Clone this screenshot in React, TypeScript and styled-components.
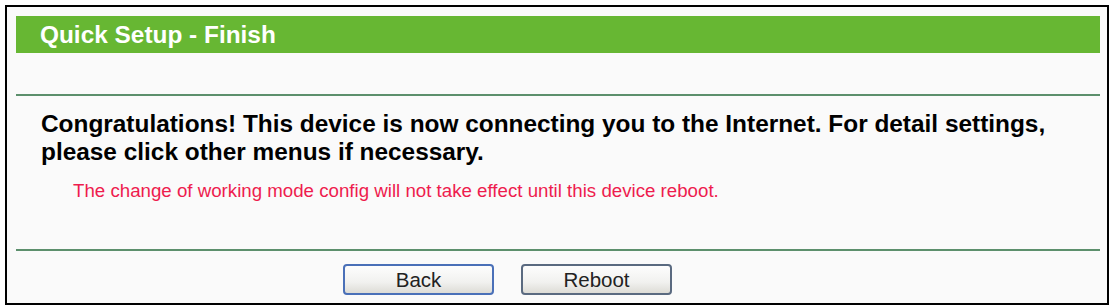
import React from "react";
import styled, { createGlobalStyle } from "styled-components";

const Global = createGlobalStyle`
  html, body { margin: 0; padding: 0; background: #ffffff; }
  body { font-family: "Liberation Sans", Arial, sans-serif; }
`;

const Frame = styled.div`
  margin: 5px 0 0 5px;
  width: 1104px;
  height: 300px;
  box-sizing: border-box;
  border: 2px solid #000;
  background: #fafafa;
  padding: 9px 7px 0 9px;
  display: flex;
  flex-direction: column;
`;

const Header = styled.div`
  height: 37px;
  background: #67b733;
  color: #ffffff;
  font-size: 24.4px;
  font-weight: bold;
  line-height: 37px;
  padding-left: 24px;
`;

const Divider = styled.div<{ $top: number }>`
  height: 2px;
  margin-top: ${(p) => p.$top}px;
  background: #5c8f6c;
`;

const Message = styled.div`
  padding: 14px 0 0 25px;
  font-size: 24.4px;
  font-weight: bold;
  line-height: 28px;
  color: #000;
`;

const Note = styled.div`
  margin-top: 14px;
  padding-left: 57px;
  font-size: 18.7px;
  line-height: 22px;
  color: #ee1c4e;
`;

const ButtonRow = styled.div`
  display: flex;
  gap: 27px;
  padding: 13px 0 0 327px;
`;

const Button = styled.button<{ $focus?: boolean }>`
  width: 151px;
  height: 31px;
  box-sizing: border-box;
  border: 2px solid ${(p) => (p.$focus ? "#4a70b8" : "#5a6a80")};
  border-radius: 4px;
  background: linear-gradient(#fdfdfd, #f1f1ef 60%, #dddcd6);
  font-family: "Liberation Sans", Arial, sans-serif;
  font-size: 20.5px;
  color: #222;
  padding: 0;
`;

export default function App() {
  return (
    <>
      <Global />
      <Frame>
        <Header>Quick Setup - Finish</Header>
        <Divider $top={41} />
        <Message>
          Congratulations! This device is now connecting you to the Internet. For detail settings,
          <br />
          please click other menus if necessary.
        </Message>
        <Note>The change of working mode config will not take effect until this device reboot.</Note>
        <Divider $top={47} />
        <ButtonRow>
          <Button $focus>Back</Button>
          <Button>Reboot</Button>
        </ButtonRow>
      </Frame>
    </>
  );
}
